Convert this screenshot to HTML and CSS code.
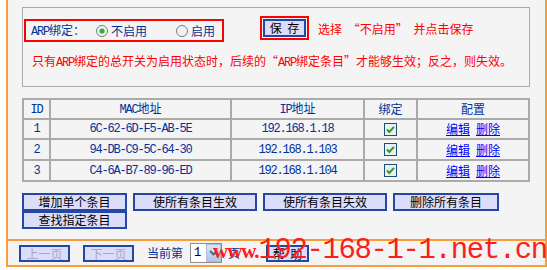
FILE: index.html
```html
<!DOCTYPE html>
<html lang="zh-CN">
<head>
    <meta charset="UTF-8">
    <meta name="viewport" content="width=device-width, initial-scale=1.0">
    <title>静态ARP绑定设置</title>
    <link rel="stylesheet" href="styles.css">
</head>
<body>

    <div class="frame">
        <div class="main">

            <div class="panel">
                <div class="panel-row">
                    <div class="mark mark-arp">
                        <span class="label"><span class="mono">ARP</span>绑定：</span>
                        <span class="opt opt-first">
                            <svg class="radio" width="12" height="12" viewBox="0 0 12 12">
                                <circle cx="6" cy="6" r="5.5" fill="#f2f2f2" stroke="#6f7f90"></circle>
                                <circle cx="6" cy="6" r="2.6" fill="#2eb22e"></circle>
                            </svg>
                            不启用
                        </span>
                        <span class="opt opt-second">
                            <svg class="radio" width="12" height="12" viewBox="0 0 12 12">
                                <circle cx="6" cy="6" r="5.5" fill="#f2f2f2" stroke="#6f7f90"></circle>
                            </svg>
                            启用
                        </span>
                    </div>
                    <div class="mark mark-save">
                        <button class="btn btn-save">保 存</button>
                    </div>
                    <span class="hint">选择 “不启用” 并点击保存</span>
                </div>
                <p class="note">只有<span class="mono">ARP</span>绑定的总开关为启用状态时，后续的“<span class="mono">ARP</span>绑定条目”才能够生效；反之，则失效。</p>
            </div>

            <table class="grid">
                <tr class="head">
                    <th class="c-id"><span class="mono">ID</span></th>
                    <th class="c-mac"><span class="mono">MAC</span>地址</th>
                    <th class="c-ip"><span class="mono">IP</span>地址</th>
                    <th class="c-bind">绑定</th>
                    <th class="c-cfg">配置</th>
                </tr>
                <tr class="row-1">
                    <td class="mono">1</td>
                    <td class="mono">6C-62-6D-F5-AB-5E</td>
                    <td class="mono">192.168.1.18</td>
                    <td>
                        <svg class="check" width="13" height="13" viewBox="0 0 13 13">
                            <rect x="0.5" y="0.5" width="12" height="12" fill="#eef0f0" stroke="#1d4f7c"></rect>
                            <path d="M3 6.5 L5.3 9 L10 3.8" fill="none" stroke="#22a322" stroke-width="2"></path>
                        </svg>
                    </td>
                    <td><a href="#">编辑</a><a href="#">删除</a></td>
                </tr>
                <tr>
                    <td class="mono">2</td>
                    <td class="mono">94-DB-C9-5C-64-30</td>
                    <td class="mono">192.168.1.103</td>
                    <td>
                        <svg class="check" width="13" height="13" viewBox="0 0 13 13">
                            <rect x="0.5" y="0.5" width="12" height="12" fill="#eef0f0" stroke="#1d4f7c"></rect>
                            <path d="M3 6.5 L5.3 9 L10 3.8" fill="none" stroke="#22a322" stroke-width="2"></path>
                        </svg>
                    </td>
                    <td><a href="#">编辑</a><a href="#">删除</a></td>
                </tr>
                <tr>
                    <td class="mono">3</td>
                    <td class="mono">C4-6A-B7-89-96-ED</td>
                    <td class="mono">192.168.1.104</td>
                    <td>
                        <svg class="check" width="13" height="13" viewBox="0 0 13 13">
                            <rect x="0.5" y="0.5" width="12" height="12" fill="#eef0f0" stroke="#1d4f7c"></rect>
                            <path d="M3 6.5 L5.3 9 L10 3.8" fill="none" stroke="#22a322" stroke-width="2"></path>
                        </svg>
                    </td>
                    <td><a href="#">编辑</a><a href="#">删除</a></td>
                </tr>
            </table>

            <div class="actions">
                <button class="btn w-add">增加单个条目</button>
                <button class="btn w-all">使所有条目生效</button>
                <button class="btn w-all">使所有条目失效</button>
                <button class="btn w-del">删除所有条目</button>
                <button class="btn w-add">查找指定条目</button>
            </div>

        </div>

        <div class="pager">
            <button class="btn btn-page" disabled>上一页</button>
            <button class="btn btn-page" disabled>下一页</button>
            <span class="page-label">当前第</span>
            <div class="select">
                <span class="select-val">1</span>
                <span class="select-arrow">
                    <svg width="9" height="6" viewBox="0 0 9 6">
                        <path d="M1 1 L4.5 4.5 L8 1" fill="none" stroke="#4d6185" stroke-width="1.8"></path>
                    </svg>
                </span>
            </div>
            <span class="page-unit">页</span>
            <button class="btn btn-help">帮 助</button>
        </div>
    </div>

    <div class="watermark"><span class="wm-www">www.</span>192-168-1-1.net.cn</div>

</body>
</html>
```

FILE: styles.css
```css
*{
    margin: 0;
    padding: 0;
    box-sizing: border-box;
}

body{
    background: #ffffff;
    font-family: "Noto Sans CJK SC", sans-serif;
    font-size: 12px;
    line-height: 16px;
    color: #003399;
    position: relative;
    height: 270px;
    overflow: hidden;
}

.mono{
    font-family: "Liberation Mono", monospace;
    font-size: 12px;
    letter-spacing: -1.2px;
}

.frame{
    margin-left: 6px;
    width: 541px;
    background: #f4f4f4;
    border-left: 2px solid #f99d3a;
    border-right: 2px solid #f99d3a;
    border-bottom: 2px solid #f99d3a;
}

.main{
    padding: 7px 15px 10px 14px;
}

/* top panel */
.panel{
    border: 1px solid #a8a8a8;
    padding: 0 0 15px 1px;
}

.panel-row{
    display: flex;
    align-items: flex-start;
}

.mark{
    border: 2px solid #ff0000;
}

.mark-arp{
    margin-top: 11px;
    width: 200px;
    height: 23px;
    padding-left: 5px;
    display: flex;
    align-items: center;
}

.mark-arp .label{
    width: 65px;
}

.opt{
    display: flex;
    align-items: center;
    gap: 3px;
}

.opt-second{
    margin-left: 29px;
}

.mark-save{
    margin-top: 8px;
    margin-left: 36px;
    width: 49px;
    height: 24px;
    padding: 1px;
}

.hint{
    margin-left: 9px;
    margin-top: 13px;
    color: #ff0000;
    word-spacing: 3px;
}

.note{
    margin: 11px 0 0 8px;
    color: #ff0000;
}

/* buttons */
.btn{
    font-family: "Noto Sans CJK SC", sans-serif;
    font-size: 12px;
    line-height: 14px;
    color: #000000;
    background: #dcdcfb;
    border: 2px solid #2447a6;
    height: 18px;
    word-spacing: 3px;
}

.btn-save{
    width: 43px;
    height: 18px;
}

/* table */
.grid{
    margin-top: 11px;
    width: 508px;
    table-layout: fixed;
    border-spacing: 0;
    border: 1px solid #aaaaaa;
}

.grid th,
.grid td{
    border: 1px solid #aaaaaa;
    text-align: center;
    font-weight: normal;
    padding: 0;
    height: 21px;
}

.grid .head th{
    height: 19px;
}

.grid .row-1 td{
    height: 20px;
}

.grid .c-id{ width: 27px; }
.grid .c-mac{ width: 181px; }
.grid .c-ip{ width: 133px; }
.grid .c-bind{ width: 53px; }

.check{
    display: block;
    margin: 0 auto;
}

.grid a{
    color: #0000ff;
    text-decoration: underline;
}

.grid a + a{
    margin-left: 6px;
}

/* action buttons */
.actions{
    margin-top: 11px;
    display: flex;
    flex-wrap: wrap;
    column-gap: 6px;
    width: 508px;
}

.w-add{ width: 105px; }
.w-all{ width: 124px; }
.w-del{ width: 106px; }

/* pager */
.pager{
    border-top: 2px solid #f99d3a;
    height: 26px;
    padding-left: 11px;
    display: flex;
    align-items: center;
}

.btn-page{
    width: 51px;
    height: 17px;
    margin-right: 13px;
}

.btn-page:disabled{
    color: #a8a8b8;
}

.select{
    margin-left: 7px;
    display: flex;
    width: 32px;
    height: 20px;
    border: 1px solid #8e8e8e;
    background: #ffffff;
}

.select-val{
    width: 15px;
    padding-left: 3px;
    color: #000000;
    font-family: "Liberation Mono", monospace;
    font-size: 12px;
    line-height: 18px;
}

.select-arrow{
    flex: 1;
    display: flex;
    align-items: center;
    justify-content: center;
    background: linear-gradient(#dbe5f6, #b3c6e6);
    border: 1px solid #a9bcd9;
}

.page-unit{
    margin-left: 6px;
}

.btn-help{
    margin-left: 26px;
    width: 43px;
    height: 17px;
}

/* watermark */
.watermark{
    position: absolute;
    left: 213px;
    top: 236px;
    color: #ff1c1c;
    font-family: "Liberation Mono", monospace;
    font-size: 29px;
    letter-spacing: -1.4px;
    line-height: 30px;
    white-space: nowrap;
}

.wm-www{
    font-family: "Liberation Serif", serif;
    font-weight: bold;
    font-size: 21px;
    letter-spacing: -1px;
}
```
